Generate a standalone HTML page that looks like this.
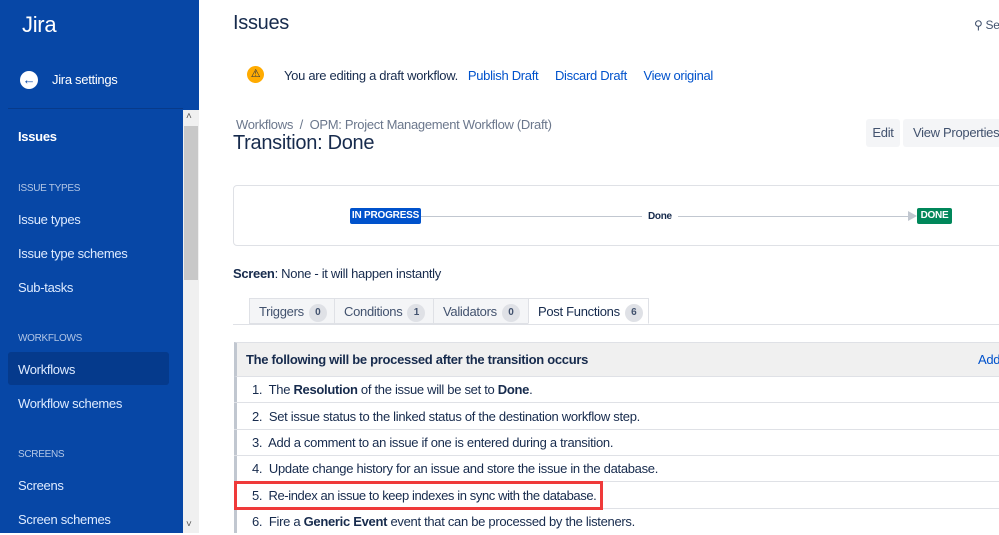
<!DOCTYPE html>
<html><head><style>
*{margin:0;padding:0;box-sizing:border-box}
body{width:999px;height:533px;overflow:hidden;position:relative;font-family:"Liberation Sans",sans-serif;color:#172b4d;background:#fff;letter-spacing:-0.3px}
.a{position:absolute;white-space:nowrap}
#side{position:absolute;left:0;top:0;width:199px;height:533px;background:#0747a6;color:#deebff}
.nav{position:absolute;left:18px;font-size:13px;color:#deebff}
.sec{position:absolute;left:18px;font-size:10px;color:#b3c7e6}
a{color:#0052cc;text-decoration:none}
.row{position:absolute;left:234px;width:765px;height:26px;border-bottom:1px solid #dfe1e6;font-size:13px;line-height:26px;padding-left:18px;color:#172b4d}
.tab{position:absolute;top:298px;height:26px;border:1px solid #dfe1e6;background:#f4f5f7;font-size:13px;line-height:26px;padding-left:9px;color:#42526e}
.cnt{display:inline-block;background:#dfe1e6;border-radius:10px;width:18px;height:18px;line-height:18px;text-align:center;font-size:10px;font-weight:bold;margin-left:5px;color:#42526e;vertical-align:1px}
</style></head><body>
<div id="side">
<div class="a" style="left:22px;top:12px;font-size:22px;color:#fff">Jira</div>
<div class="a" style="left:20px;top:71px;width:18px;height:18px;border-radius:50%;background:#fff;color:#0747a6;font-size:13px;font-weight:bold;text-align:center;line-height:17px">←</div>
<div class="a" style="left:52px;top:72px;font-size:13px;color:#fff">Jira settings</div>
<div class="a" style="left:8px;top:108px;width:175px;height:1px;background:#073a8a"></div>
<div class="nav" style="top:129px;font-weight:bold;color:#fff">Issues</div>
<div class="sec" style="top:183px">ISSUE TYPES</div>
<div class="nav" style="top:212px">Issue types</div>
<div class="nav" style="top:246px">Issue type schemes</div>
<div class="nav" style="top:280px">Sub-tasks</div>
<div class="sec" style="top:333px">WORKFLOWS</div>
<div class="a" style="left:8px;top:352px;width:161px;height:33px;background:#053a8c;border-radius:3px"></div>
<div class="nav" style="top:362px">Workflows</div>
<div class="nav" style="top:396px">Workflow schemes</div>
<div class="sec" style="top:449px">SCREENS</div>
<div class="nav" style="top:478px">Screens</div>
<div class="nav" style="top:512px">Screen schemes</div>
<div class="a" style="left:183px;top:110px;width:16px;height:423px;background:#f0f0f0"></div>
<div class="a" style="left:184px;top:126px;width:14px;height:154px;background:#c8c8c8"></div>
<div class="a" style="left:186px;top:111px;font-size:10px;color:#555">˄</div>
<div class="a" style="left:186px;top:519px;font-size:10px;color:#555">˅</div>
</div>

<div class="a" style="left:233px;top:12px;font-size:20px">Issues</div>
<div class="a" style="left:974px;top:18px;font-size:12px;color:#42526e">⚲ Se</div>
<div class="a" style="left:247px;top:66px;width:17px;height:17px;border-radius:50%;background:#ffab00;font-size:11px;text-align:center;line-height:17px;color:#172b4d">⚠</div>
<div class="a" style="left:284px;top:68px;font-size:13px">You are editing a draft workflow.&nbsp;&nbsp;&nbsp;<a>Publish Draft</a>&nbsp;&nbsp;&nbsp;&nbsp;&nbsp;<a>Discard Draft</a>&nbsp;&nbsp;&nbsp;&nbsp;&nbsp;<a>View original</a></div>
<div class="a" style="left:236px;top:117px;font-size:13px;color:#6b778c">Workflows&nbsp;&nbsp;/&nbsp;&nbsp;OPM: Project Management Workflow (Draft)</div>
<div class="a" style="left:233px;top:132px;font-size:20px">Transition: Done</div>
<div class="a" style="left:866px;top:119px;width:34px;height:28px;background:#f4f5f7;border-radius:3px;font-size:13px;line-height:28px;text-align:center;color:#42526e">Edit</div>
<div class="a" style="left:903px;top:119px;width:100px;height:28px;background:#f4f5f7;border-radius:3px;font-size:13px;line-height:28px;padding-left:10px;color:#42526e">View Properties</div>

<div class="a" style="left:233px;top:185px;width:780px;height:61px;border:1px solid #dfe1e6;border-radius:4px"></div>
<div class="a" style="left:421px;top:216px;width:490px;height:1px;background:#c1c7d0"></div>
<div class="a" style="left:908px;top:211px;width:0;height:0;border-left:9px solid #c1c7d0;border-top:5px solid transparent;border-bottom:5px solid transparent"></div>
<div class="a" style="left:350px;top:208px;width:71px;height:16px;background:#0052cc;color:#fff;font-size:10px;font-weight:bold;line-height:16px;text-align:center;border-radius:2px;letter-spacing:-0.2px">IN PROGRESS</div>
<div class="a" style="left:642px;top:209px;background:#fff;padding:0 6px;font-size:10px;font-weight:bold;line-height:16px">Done</div>
<div class="a" style="left:917px;top:208px;width:35px;height:16px;background:#00875a;color:#fff;font-size:10px;font-weight:bold;line-height:16px;text-align:center;border-radius:2px">DONE</div>

<div class="a" style="left:233px;top:266px;font-size:13px"><b>Screen</b>: None - it will happen instantly</div>

<div class="a" style="left:233px;top:324px;width:766px;height:1px;background:#dfe1e6"></div>
<div class="tab" style="left:249px;width:86px">Triggers<span class="cnt">0</span></div>
<div class="tab" style="left:334px;width:100px">Conditions<span class="cnt">1</span></div>
<div class="tab" style="left:433px;width:96px">Validators<span class="cnt">0</span></div>
<div class="tab" style="left:528px;width:121px;background:#fff;border-bottom-color:#fff;color:#172b4d">Post Functions<span class="cnt">6</span></div>

<div class="a" style="left:234px;top:342px;width:765px;height:191px;border-left:3px solid #c1c7d0"></div>
<div class="a" style="left:234px;top:342px;width:765px;height:35px;background:#f0f0f0;border-top:1px solid #dfe1e6;border-bottom:1px solid #dfe1e6;border-left:3px solid #c1c7d0;font-size:13px;font-weight:bold;line-height:33px;padding-left:9px">The following will be processed after the transition occurs<span style="position:absolute;left:741px;font-weight:normal;color:#0052cc">Add</span></div>
<div class="row" style="top:377px">1.&nbsp; The <b>Resolution</b> of the issue will be set to <b>Done</b>.</div>
<div class="row" style="top:404px">2.&nbsp; Set issue status to the linked status of the destination workflow step.</div>
<div class="row" style="top:430px">3.&nbsp; Add a comment to an issue if one is entered during a transition.</div>
<div class="row" style="top:456px">4.&nbsp; Update change history for an issue and store the issue in the database.</div>
<div class="row" style="top:483px;letter-spacing:-0.4px">5.&nbsp; Re-index an issue to keep indexes in sync with the database.</div>
<div class="row" style="top:509px;border-bottom:none">6.&nbsp; Fire a <b>Generic Event</b> event that can be processed by the listeners.</div>
<div class="a" style="left:234px;top:481px;width:369px;height:29px;border:3px solid #ef3a3a"></div>
</body></html>
